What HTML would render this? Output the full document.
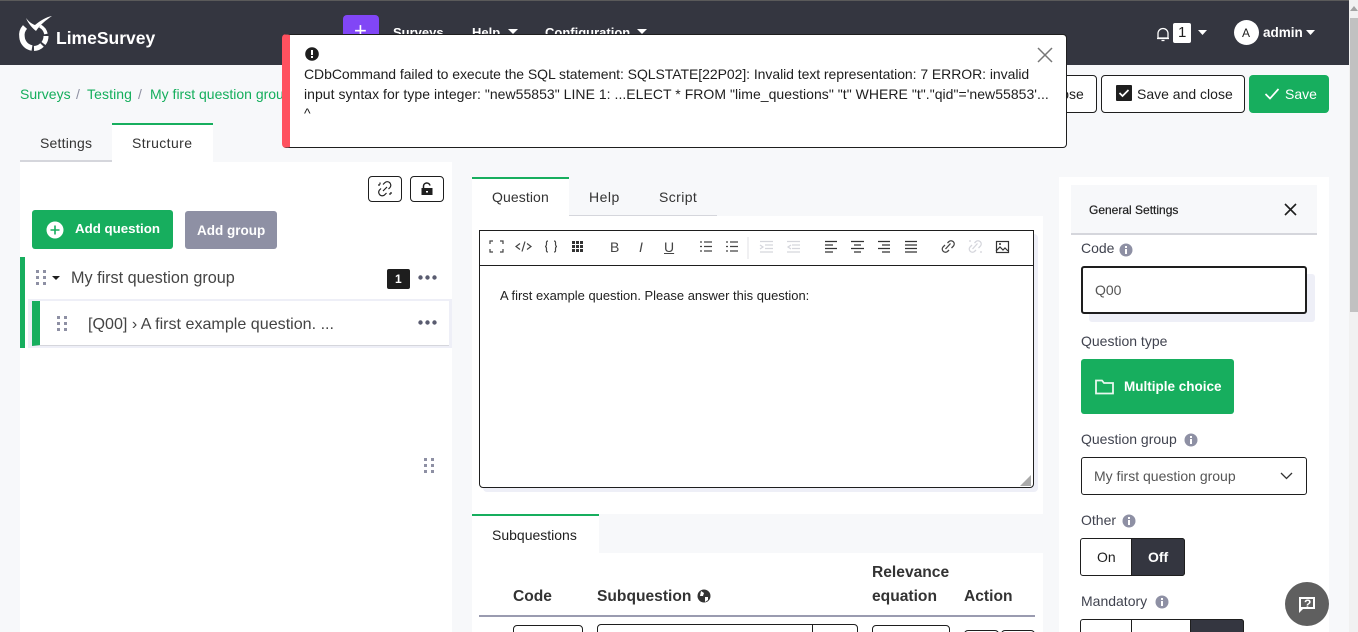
<!DOCTYPE html>
<html><head><meta charset="utf-8"><style>
html,body{margin:0;padding:0;width:1358px;height:632px;overflow:hidden;background:#f7f8fa;font-family:"Liberation Sans",sans-serif;font-size:14px;color:#1e1e1e}
#r{position:absolute;left:0;top:0;width:1358px;height:632px;overflow:hidden;background:#f7f8fa}
#r div,#r span,#r svg{position:absolute;box-sizing:border-box}
.t{white-space:nowrap;line-height:18px}
.b{font-weight:700}
.g{color:#14ae5c}
.lab{color:#40434f}
.w{color:#fff}
.th{font-weight:700;font-size:15.600px;color:#333}
.tab{color:#333;letter-spacing:.2px}
</style></head><body><div id="r">
<!-- navbar -->
<div style="left:0;top:0;width:1349px;height:65px;background:#343640;border-top:1px solid #5a5a5a"></div>
<svg style="left:18px;top:14px" width="38" height="38" viewBox="0 0 38 38"><path d="M8 4 C11 8 14 10 17 11 C22 7 28 3 34 2 C28 6 22 11 18 17 C14 14 10 9 8 4Z" fill="#fff"/><path d="M7 13 A12 12 0 0 0 4 23 A12 12 0 0 0 14 34" fill="none" stroke="#fff" stroke-width="5.500"/><path d="M16 34.500 A12 12 0 0 0 24 31" fill="none" stroke="#fff" stroke-width="5"/><path d="M25.500 29.500 A12 12 0 0 0 28 22" fill="none" stroke="#fff" stroke-width="5"/><path d="M22 12 A12 12 0 0 1 28 20" fill="none" stroke="#fff" stroke-width="3.500"/></svg>
<span class="t b w" style="left:56px;top:29px;font-size:17.500px">LimeSurvey</span>
<div style="left:343px;top:15px;width:36px;height:30px;background:#8146f6;border-radius:4px"></div>
<span class="t w" style="left:354px;top:22px;font-size:22px">+</span>
<span class="t w" style="left:393px;top:24px;font-weight:700;font-size:13px">Surveys</span>
<span class="t w" style="left:472px;top:24px;font-weight:700;font-size:13px">Help</span>
<svg style="left:508px;top:29px" width="10" height="6"><path d="M0 0h10L5 5z" fill="#fff"/></svg>
<span class="t w" style="left:545px;top:24px;font-weight:700;font-size:13px">Configuration</span>
<svg style="left:637px;top:29px" width="10" height="6"><path d="M0 0h10L5 5z" fill="#fff"/></svg>
<svg style="left:1156px;top:27px" width="14" height="15" viewBox="0 0 14 15"><path d="M2 11V6.500a5 5 0 0 1 10 0V11zM1 11.500h12M5.500 13.500h3" fill="none" stroke="#fff" stroke-width="1.300"/></svg>
<div style="left:1173px;top:23px;width:18px;height:20px;background:#fff;border-radius:2px"></div>
<span class="t" style="left:1178px;top:24px;font-size:15px">1</span>
<svg style="left:1198px;top:30px" width="9" height="5"><path d="M0 0h9L4.500 5z" fill="#fff"/></svg>
<div style="left:1234px;top:20px;width:25px;height:25px;background:#fff;border-radius:50%"></div>
<span class="t" style="left:1242px;top:24px;font-size:12px">A</span>
<span class="t b w" style="left:1263px;top:24px;font-size:13.500px">admin</span>
<svg style="left:1306px;top:30px" width="9" height="5"><path d="M0 0h9L4.500 5z" fill="#fff"/></svg>
<!-- scrollbar -->
<div style="left:1349px;top:0;width:9px;height:632px;background:#f1f1f1"></div>
<div style="left:1350px;top:18px;width:8px;height:294px;background:#c1c1c1"></div>
<svg style="left:1350px;top:6px" width="8" height="6"><path d="M0 5h8L4 0z" fill="#a3a3a3"/></svg>
<!-- breadcrumb -->
<span class="t g" style="left:20px;top:85px">Surveys</span>
<span class="t" style="left:76px;top:85px;color:#8e90a2">/</span>
<span class="t g" style="left:87px;top:85px;letter-spacing:.1px">Testing</span>
<span class="t" style="left:138px;top:85px;color:#8e90a2">/</span>
<span class="t g" style="left:150px;top:85px">My first question group</span>
<!-- top buttons -->
<div style="left:1000px;top:75px;width:97px;height:38px;background:#fff;border:1px solid #1e1e1e;border-radius:4px"></div>
<span class="t" style="left:1048px;top:85px">Close</span>
<div style="left:1101px;top:75px;width:144px;height:38px;background:#fff;border:1px solid #1e1e1e;border-radius:4px"></div>
<svg style="left:1116px;top:85px" width="16" height="16"><rect width="16" height="16" rx="1" fill="#1e1e1e"/><path d="M3.500 8l3 3 6-6" stroke="#fff" stroke-width="1.700" fill="none"/></svg>
<span class="t" style="left:1137px;top:85px">Save and close</span>
<div style="left:1249px;top:75px;width:80px;height:38px;background:#17ae5e;border-radius:4px"></div>
<svg style="left:1264px;top:87px" width="16" height="14"><path d="M1.500 7l4.500 4.500L14.500 2" stroke="#fff" stroke-width="1.700" fill="none"/></svg>
<span class="t w" style="left:1285px;top:85px">Save</span>
<!-- left tabs -->
<div style="left:20px;top:160px;width:92px;height:2px;background:#d5d6dc"></div>
<span class="t tab" style="left:40px;top:134px">Settings</span>
<div style="left:112px;top:123px;width:101px;height:40px;background:#fff;border-top:2px solid #17ae5e"></div>
<span class="t tab" style="left:132px;top:134px;letter-spacing:.4px">Structure</span>
<!-- left panel -->
<div style="left:20px;top:162px;width:432px;height:470px;background:#fff"></div>
<div style="left:368px;top:176px;width:34px;height:26px;background:#fff;border:1px solid #1e1e1e;border-radius:4px"></div>
<svg style="left:377px;top:181px" width="16" height="16" viewBox="0 0 16 16"><path d="M6 3.500l1.500-1.500a3.500 3.500 0 0 1 5.500 4.500L11.500 8M9.500 12l-1.500 1.500a3.500 3.500 0 0 1-5.500-4.500L4 7.500M6 10l4-4M3 1.500v2M1 4h2M13 12v2M13 12h2" fill="none" stroke="#222" stroke-width="1.200"/></svg>
<div style="left:410px;top:176px;width:34px;height:26px;background:#fff;border:1px solid #1e1e1e;border-radius:4px"></div>
<svg style="left:420px;top:182px" width="14" height="14" viewBox="0 0 14 14"><path d="M3.500 6V4a3.300 3.300 0 0 1 6.500-.5" fill="none" stroke="#1e1e1e" stroke-width="1.500"/><path d="M1.500 6h11v7h-11zM6 9v1.500h2V9z" fill="#1e1e1e" fill-rule="evenodd"/></svg>
<div style="left:32px;top:210px;width:141px;height:39px;background:#17ae5e;border-radius:3px"></div>
<svg style="left:46px;top:221px" width="18" height="18"><circle cx="9" cy="9" r="8.500" fill="#fff"/><path d="M9 4.500v9M4.500 9h9" stroke="#17ae5e" stroke-width="1.600"/></svg>
<span class="t b w" style="left:75px;top:220px;font-size:13.300px">Add question</span>
<div style="left:185px;top:211px;width:92px;height:38px;background:#8e90a4;border-radius:3px"></div>
<span class="t b w" style="left:197px;top:222px;font-size:13.500px">Add group</span>
<div style="left:20px;top:257px;width:5px;height:91px;background:#17ae5e"></div>
<svg style="left:36px;top:270px" width="10" height="15" fill="#8e90a4"><rect width="3" height="3"/><rect x="7" width="3" height="3"/><rect y="6" width="3" height="3"/><rect x="7" y="6" width="3" height="3"/><rect y="12" width="3" height="3"/><rect x="7" y="12" width="3" height="3"/></svg>
<svg style="left:52px;top:276px" width="8" height="4"><path d="M0 0h8L4 4z" fill="#1e1e1e"/></svg>
<span class="t" style="left:71px;top:269px;font-size:16.200px;color:#444">My first question group</span>
<div style="left:387px;top:269px;width:23px;height:20px;background:#1e1e1e;border-radius:2px"></div>
<span class="t b w" style="left:395px;top:270px;font-size:12px">1</span>
<svg style="left:418px;top:275px" width="19" height="5" fill="#5a5c70"><circle cx="2.500" cy="2.500" r="2.200"/><circle cx="9.500" cy="2.500" r="2.200"/><circle cx="16.500" cy="2.500" r="2.200"/></svg>
<div style="left:28px;top:299px;width:424px;height:49px;background:#eeeff7"></div>
<div style="left:32px;top:301px;width:417px;height:45px;background:#fff;border-left:8px solid #17ae5e;border-bottom:1px solid #d5d6dc"></div>
<svg style="left:57px;top:316px" width="10" height="15" fill="#8e90a4"><rect width="3" height="3"/><rect x="7" width="3" height="3"/><rect y="6" width="3" height="3"/><rect x="7" y="6" width="3" height="3"/><rect y="12" width="3" height="3"/><rect x="7" y="12" width="3" height="3"/></svg>
<span class="t" style="left:88px;top:315px;font-size:16.100px;color:#444">[Q00] › A first example question. ...</span>
<svg style="left:418px;top:320px" width="19" height="5" fill="#5a5c70"><circle cx="2.500" cy="2.500" r="2.200"/><circle cx="9.500" cy="2.500" r="2.200"/><circle cx="16.500" cy="2.500" r="2.200"/></svg>
<svg style="left:424px;top:458px" width="10" height="15" fill="#8e90a4"><rect width="3" height="3"/><rect x="7" width="3" height="3"/><rect y="6" width="3" height="3"/><rect x="7" y="6" width="3" height="3"/><rect y="12" width="3" height="3"/><rect x="7" y="12" width="3" height="3"/></svg>
<!-- middle tabs -->
<div style="left:472px;top:177px;width:97px;height:40px;background:#fff;border-top:2px solid #17ae5e"></div>
<span class="t tab" style="left:492px;top:188px;letter-spacing:.1px">Question</span>
<div style="left:569px;top:215px;width:148px;height:2px;background:#d5d6dc"></div>
<span class="t tab" style="left:589px;top:188px;letter-spacing:.5px">Help</span>
<span class="t tab" style="left:659px;top:188px;letter-spacing:.4px">Script</span>
<div style="left:472px;top:216px;width:571px;height:298px;background:#fff"></div>
<div style="left:483px;top:234px;width:555px;height:258px;background:#eeeff7;border-radius:4px"></div>
<div style="left:479px;top:230px;width:555px;height:258px;background:#fff;border:1px solid #1e1e1e;border-radius:0 0 4px 4px"></div>
<div style="left:480px;top:265px;width:553px;height:1px;background:#1e1e1e"></div>
<svg style="left:480px;top:231px" width="553" height="34" viewBox="0 0 553 34" fill="none" stroke="#444" stroke-width="1.200">
<path d="M10 13v-3h3M20 10h3v3M23 18v3h-3M13 21h-3v-3"/>
<path d="M40 12.500l-4 3 4 3M47 12.500l4 3-4 3M45 10.500l-3 10"/>
<path d="M68 10c-2 0-1.500 2-1.500 3s-.5 2.500-1.500 2.500c1 0 1.500 1 1.500 2.500s-.5 3 1.500 3M74 10c2 0 1.500 2 1.500 3s.5 2.500 1.500 2.500c-1 0-1.500 1-1.500 2.500s.5 3-1.500 3"/>
<g fill="#333" stroke="none"><rect x="92" y="10" width="3" height="3"/><rect x="96" y="10" width="3" height="3"/><rect x="100" y="10" width="3" height="3"/><rect x="92" y="14" width="3" height="3"/><rect x="96" y="14" width="3" height="3"/><rect x="100" y="14" width="3" height="3"/><rect x="92" y="18" width="3" height="3"/><rect x="96" y="18" width="3" height="3"/><rect x="100" y="18" width="3" height="3"/></g>
<path d="M224 11h8M224 15.500h8M224 20h8M220 11h2M220 15.500h2M220 20h2"/>
<path d="M250 11h8M250 15.500h8M250 20h8M246 11h2M246 15.500h2M246 20h2"/>
<path d="M268 6v22" stroke="#e5e5e8"/>
<g stroke="#d5d6dc"><path d="M280 10.500h13M285 14h8M285 17.500h8M280 21h13"/><path d="M280 14l3 2-3 2"/><path d="M307 10.500h13M312 14h8M312 17.500h8M307 21h13"/><path d="M311 14l-3 2 3 2"/></g>
<g stroke-width="1.300" stroke="#333"><path d="M345 10.500h12M345 14h8M345 17.500h12M345 21h8"/><path d="M371 10.500h13M374 14h7M371 17.500h13M374 21h7"/><path d="M398 10.500h12M402 14h8M398 17.500h12M402 21h8"/><path d="M425 10.500h12M425 14h12M425 17.500h12M425 21h12"/></g>
<path d="M467.500 12l1.500-1.500a3.200 3.200 0 0 1 4.500 4.500l-2 2M469 19l-1.500 1.500a3.200 3.200 0 0 1-4.500-4.500l2-2M465.500 18l5-5.500" stroke-width="1.300"/>
<g stroke="#d5d6dc" stroke-width="1.300"><path d="M494.500 12l1.500-1.500a3.200 3.200 0 0 1 4.500 4.500l-2 2M496 19l-1.500 1.500a3.200 3.200 0 0 1-4.500-4.500l2-2M492.500 18l5-5.500M490 9v2M501 20v2"/></g>
<rect x="516.500" y="10.500" width="12" height="11" stroke="#333"/><path d="M516 20l4-4 3 3 2-2 3 3" stroke="#333"/><circle cx="520" cy="13" r="1" fill="#333" stroke="none"/>
</svg>
<span class="t" style="left:610px;top:238px;font-size:14px;color:#444">B</span>
<span class="t" style="left:639px;top:238px;font-size:14px;color:#444;font-style:italic">I</span>
<span class="t" style="left:664px;top:238px;font-size:14px;color:#444;text-decoration:underline">U</span>
<span class="t" style="left:500px;top:287px;font-size:12.950px;color:#222">A first example question. Please answer this question:</span>
<svg style="left:1020px;top:475px" width="11" height="11"><path d="M11 0v11H0z" fill="#aaa"/></svg>
<!-- subquestions -->
<div style="left:472px;top:514px;width:127px;height:40px;background:#fff;border-top:2px solid #17ae5e"></div>
<span class="t" style="left:492px;top:526px;font-size:14px">Subquestions</span>
<div style="left:472px;top:553px;width:571px;height:79px;background:#fff"></div>
<span class="t th" style="left:513px;top:588px;">Code</span>
<span class="t th" style="left:597px;top:588px;">Subquestion</span>
<svg style="left:697px;top:589px" width="14" height="14"><circle cx="7" cy="7" r="6.500" fill="#333"/><path d="M4 2l3 2-1 3-3 0zM8 8l3 0 0 3-3 2z" fill="#fff"/></svg>
<span class="t th" style="left:872px;top:564px;">Relevance</span>
<span class="t th" style="left:872px;top:588px;">equation</span>
<span class="t th" style="left:964px;top:588px;">Action</span>
<div style="left:479px;top:615px;width:556px;height:2px;background:#9a9bb0"></div>
<div style="left:513px;top:625px;width:70px;height:20px;border:1px solid #1e1e1e;border-radius:4px;background:#fff"></div>
<div style="left:597px;top:624px;width:261px;height:20px;border:1px solid #1e1e1e;border-radius:4px;background:#fff"></div>
<div style="left:812px;top:625px;width:1px;height:10px;background:#1e1e1e"></div>
<div style="left:872px;top:625px;width:78px;height:20px;border:1px solid #1e1e1e;border-radius:4px;background:#fff"></div>
<div style="left:964px;top:630px;width:35px;height:20px;border:1px solid #1e1e1e;border-radius:4px;background:#fff"></div>
<div style="left:1001px;top:630px;width:34px;height:20px;border:1px solid #1e1e1e;border-radius:4px;background:#fff"></div>
<!-- right panel -->
<div style="left:1059px;top:177px;width:270px;height:455px;background:#fff"></div>
<div style="left:1071px;top:185px;width:246px;height:50px;background:#f7f8fa;border-bottom:2px solid #d5d6dc"></div>
<span class="t" style="left:1089px;top:201px;font-size:12px;color:#1e1e1e;-webkit-text-stroke:.2px #1e1e1e">General Settings</span>
<svg style="left:1284px;top:203px" width="13" height="13"><path d="M1 1l11 11M12 1L1 12" stroke="#1e1e1e" stroke-width="1.600"/></svg>
<span class="t lab" style="left:1081px;top:239px">Code</span>
<svg style="left:1119px;top:243px" width="14" height="14"><circle cx="7" cy="7" r="6.500" fill="#8e90a4"/><rect x="6" y="6" width="2" height="5" fill="#fff"/><rect x="6" y="3" width="2" height="2" fill="#fff"/></svg>
<div style="left:1089px;top:274px;width:226px;height:48px;background:#eeeff7;border-radius:3px"></div>
<div style="left:1081px;top:266px;width:226px;height:48px;background:#fff;border:2px solid #1e1e1e;border-radius:3px"></div>
<span class="t" style="left:1095px;top:281px;color:#555">Q00</span>
<span class="t lab" style="left:1081px;top:332px">Question type</span>
<div style="left:1081px;top:359px;width:153px;height:55px;background:#17ae5e;border-radius:3px"></div>
<svg style="left:1095px;top:379px" width="19" height="16"><path d="M1 14.500V1.500h6l2 2.500h9v10.500z" fill="none" stroke="#e8f7ef" stroke-width="1.800"/></svg>
<span class="t b w" style="left:1124px;top:378px;font-size:13.500px">Multiple choice</span>
<span class="t lab" style="left:1081px;top:430px">Question group</span>
<svg style="left:1184px;top:433px" width="14" height="14"><circle cx="7" cy="7" r="6.500" fill="#8e90a4"/><rect x="6" y="6" width="2" height="5" fill="#fff"/><rect x="6" y="3" width="2" height="2" fill="#fff"/></svg>
<div style="left:1081px;top:457px;width:226px;height:38px;background:#fff;border:1px solid #1e1e1e;border-radius:3px"></div>
<span class="t" style="left:1094px;top:467px;color:#555">My first question group</span>
<svg style="left:1280px;top:472px" width="13" height="8"><path d="M1 1l5.500 5.500L12 1" stroke="#333" stroke-width="1.300" fill="none"/></svg>
<span class="t lab" style="left:1081px;top:511px">Other</span>
<svg style="left:1122px;top:514px" width="14" height="14"><circle cx="7" cy="7" r="6.500" fill="#8e90a4"/><rect x="6" y="6" width="2" height="5" fill="#fff"/><rect x="6" y="3" width="2" height="2" fill="#fff"/></svg>
<div style="left:1080px;top:538px;width:105px;height:38px;background:#fff;border:1px solid #1e1e1e;border-radius:3px"></div>
<div style="left:1131px;top:538px;width:54px;height:38px;background:#343640;border:1px solid #1e1e1e;border-radius:0 3px 3px 0"></div>
<span class="t" style="left:1097px;top:548px">On</span>
<span class="t b w" style="left:1148px;top:548px">Off</span>
<span class="t lab" style="left:1081px;top:592px">Mandatory</span>
<svg style="left:1155px;top:595px" width="14" height="14"><circle cx="7" cy="7" r="6.500" fill="#8e90a4"/><rect x="6" y="6" width="2" height="5" fill="#fff"/><rect x="6" y="3" width="2" height="2" fill="#fff"/></svg>
<div style="left:1080px;top:619px;width:164px;height:30px;background:#fff;border:1px solid #1e1e1e;border-radius:3px"></div>
<div style="left:1131px;top:619px;width:1px;height:20px;background:#1e1e1e"></div>
<div style="left:1190px;top:619px;width:54px;height:30px;background:#343640;border:1px solid #1e1e1e;border-radius:0 3px 3px 0"></div>
<div style="left:1285px;top:582px;width:44px;height:44px;background:#5f5f5f;border-radius:50%"></div>
<svg style="left:1298px;top:596px" width="18" height="18" viewBox="0 0 18 18"><path d="M1 1h16v12H5l-4 4z" fill="#fff"/><rect x="3" y="3" width="12" height="8" fill="#5f5f5f"/></svg>
<span class="t b w" style="left:1304px;top:595px;font-size:12px">?</span>
<!-- alert -->
<div style="left:282px;top:34px;width:785px;height:114px;background:#fff;border:1px solid #1e1e1e;border-left:8px solid #ff515f;border-radius:4px"></div>
<svg style="left:305px;top:47px" width="14" height="14"><circle cx="7" cy="7" r="6.800" fill="#1e1e1e"/><rect x="6" y="3" width="2" height="5" fill="#fff"/><rect x="6" y="9" width="2" height="2" fill="#fff"/></svg>
<svg style="left:1037px;top:47px" width="16" height="16"><path d="M1 1l14 14M15 1L1 15" stroke="#777" stroke-width="1.500"/></svg>
<span class="t" style="left:304px;top:65px;font-size:14px;letter-spacing:-.055px">CDbCommand failed to execute the SQL statement: SQLSTATE[22P02]: Invalid text representation: 7 ERROR: invalid</span>
<span class="t" style="left:304px;top:85px;font-size:14px;letter-spacing:.035px">input syntax for type integer: "new55853" LINE 1: ...ELECT * FROM "lime_questions" "t" WHERE "t"."qid"='new55853'...</span>
<span class="t" style="left:304px;top:104px;font-size:14px">^</span>
</div></body></html>
